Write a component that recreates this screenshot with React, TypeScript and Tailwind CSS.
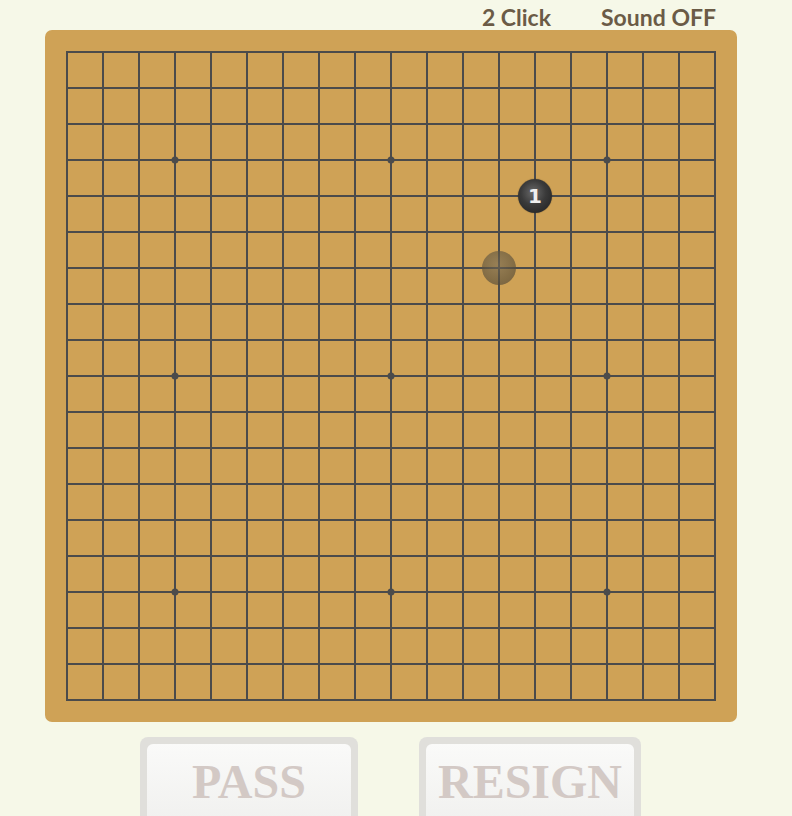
import React from "react";

const SIZE = 19;
const GAP = 36;
const STARS = [3, 9, 15];

function BoardLines() {
  const len = GAP * (SIZE - 1);
  const lines = [];
  for (let i = 0; i < SIZE; i++) {
    const p = i * GAP + 1;
    lines.push(<line key={"h" + i} x1={0} y1={p} x2={len + 2} y2={p} />);
    lines.push(<line key={"v" + i} x1={p} y1={0} x2={p} y2={len + 2} />);
  }
  return (
    <svg width={len + 2} height={len + 2} className="block">
      <g stroke="#4b4b4b" strokeWidth={2}>{lines}</g>
      {STARS.map((x) =>
        STARS.map((y) => (
          <circle key={`${x}-${y}`} cx={x * GAP + 1} cy={y * GAP + 1} r={3.5} fill="#4b4b4b" />
        ))
      )}
    </svg>
  );
}

function Button({ label, width }: { label: string; width: string }) {
  return (
    <div className={`${width} h-[90px] rounded-t-[8px] bg-[#e0dfdb] px-[7px] pt-[7px]`}>
      <div className="flex h-full items-start justify-center rounded-t-[6px] bg-gradient-to-b from-[#fafaf9] to-[#f0f0ee] pt-[14px]">
        <span
          className="text-[48px] font-bold leading-none text-[#d3c9c5]"
          style={{ fontFamily: '"Liberation Serif", serif' }}
        >
          {label}
        </span>
      </div>
    </div>
  );
}

export default function App() {
  return (
    <div className="h-[816px] w-[792px] overflow-hidden bg-[#f6f8e8]">
      <div
        className="flex h-[30px] items-center justify-end gap-[50px] pr-[76px] pt-[5px] text-[23px] font-bold text-[#6b5b46]"
        style={{ fontFamily: 'Lato, "Open Sans", sans-serif' }}
      >
        <span>2 Click</span>
        <span>Sound OFF</span>
      </div>

      <div className="ml-[45px] w-[692px] rounded-[7px] bg-[#cfa256] p-[21px]">
        <div className="relative">
          <BoardLines />
          {/* move 1 */}
          <div className="absolute left-[452px] top-[128px] flex h-[34px] w-[34px] items-center justify-center rounded-full bg-[radial-gradient(circle_at_45%_40%,#6a6a6a_0%,#3a3a3a_45%,#1c1c1c_100%)] shadow-[0_0_1px_rgba(0,0,0,0.6)]">
            <span
              className="text-[20px] font-bold leading-none text-[#eeeeee]"
              style={{ fontFamily: '"DejaVu Sans", sans-serif' }}
            >
              1
            </span>
          </div>
          {/* hover preview */}
          <div className="absolute left-[416px] top-[200px] h-[34px] w-[34px] rounded-full bg-[radial-gradient(circle_at_45%_40%,rgba(115,105,85,0.6)_0%,rgba(90,80,60,0.65)_60%,rgba(75,65,50,0.7)_100%)]" />
        </div>
      </div>

      <div className="mt-[15px] flex gap-[61px] pl-[140px]">
        <Button label="PASS" width="w-[218px]" />
        <Button label="RESIGN" width="w-[222px]" />
      </div>
    </div>
  );
}
